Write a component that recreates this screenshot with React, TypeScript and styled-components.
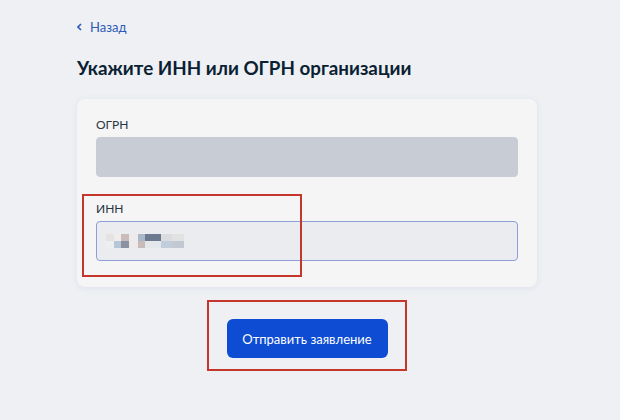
import React from 'react';
import styled, { createGlobalStyle } from 'styled-components';

const GlobalStyle = createGlobalStyle`
  html, body {
    margin: 0;
    padding: 0;
    background: #eef0f4;
  }
  body {
    font-family: Lato, "Noto Sans", "Liberation Sans", sans-serif;
    color: #0b1f33;
  }
`;

const Page = styled.div`
  position: relative;
  width: 620px;
  height: 420px;
  box-sizing: border-box;
  padding: 18px 0 0 77px;
  overflow: hidden;
`;

const BackLink = styled.a`
  display: flex;
  align-items: center;
  gap: 8px;
  height: 18px;
  font-size: 13px;
  color: #2e5bb8;
  text-decoration: none;
  cursor: pointer;
`;

const Title = styled.h1`
  margin: 19px 0 0 0;
  font-size: 18.8px;
  line-height: 26px;
  font-weight: 700;
  color: #0b1f33;
`;

const Card = styled.div`
  margin-top: 18px;
  width: 460px;
  box-sizing: border-box;
  padding: 19px 19px 26px 19px;
  background: #f5f5f6;
  border-radius: 8px;
  box-shadow: 0 1px 6px rgba(80, 100, 140, 0.1);
  display: flex;
  flex-direction: column;
  gap: 25px;
`;

const Field = styled.div`
  display: flex;
  flex-direction: column;
  gap: 5px;
`;

const Label = styled.label`
  font-size: 12px;
  line-height: 14px;
  color: #2a3541;
`;

const Input = styled.div<{ $disabled?: boolean }>`
  height: 40px;
  box-sizing: border-box;
  border-radius: 4px;
  background: ${p => (p.$disabled ? '#c8ccd4' : '#ebecef')};
  border: 1px solid ${p => (p.$disabled ? '#c8ccd4' : '#8d9ed8')};
  display: flex;
  align-items: center;
  padding-left: 9px;
`;

const Actions = styled.div`
  width: 460px;
  display: flex;
  justify-content: center;
  margin-top: 32px;
`;

const Button = styled.button`
  width: 161px;
  height: 39px;
  border: none;
  border-radius: 6px;
  background: #0d4cd3;
  color: #ffffff;
  font-family: Lato, "Noto Sans", "Liberation Sans", sans-serif;
  font-size: 13px;
  cursor: pointer;
`;

const Highlight = styled.div<{ $x: number; $y: number; $w: number; $h: number }>`
  position: absolute;
  left: ${p => p.$x}px;
  top: ${p => p.$y}px;
  width: ${p => p.$w}px;
  height: ${p => p.$h}px;
  box-sizing: border-box;
  border: 2px solid #c5372c;
  pointer-events: none;
`;

// pixelated (censored) value in the ИНН field
const blur: [number, number, number, string][] = [
  [0, 0, 8, '#e6e2e2'], [8, 0, 7, '#eeecec'], [15, 0, 8, '#cbbcbb'], [23, 0, 9, '#eceaea'],
  [32, 0, 7, '#a9b8c8'], [39, 0, 16, '#6c7a90'], [55, 0, 11, '#dcdbdd'], [66, 0, 12, '#e2e2e3'],
  [0, 7, 8, '#eceef0'], [8, 7, 7, '#b6c6d6'], [15, 7, 8, '#8a92a2'], [23, 7, 9, '#eceaea'],
  [32, 7, 7, '#c9bbbb'], [39, 7, 16, '#e4e7ec'], [55, 7, 11, '#c2cddb'], [66, 7, 12, '#c2c9d2'],
];

const Pixelated = () => (
  <svg width="78" height="14" viewBox="0 0 78 14">
    {blur.map(([x, y, w, c], i) => (
      <rect key={i} x={x} y={y} width={w} height={7} fill={c} />
    ))}
  </svg>
);

const App: React.FC = () => {
  return (
    <Page>
      <GlobalStyle />
      <BackLink>
        <svg width="5" height="8" viewBox="0 0 5 8">
          <path d="M4 1 L1 4 L4 7" fill="none" stroke="#2e5bb8" strokeWidth="1.6" />
        </svg>
        Назад
      </BackLink>
      <Title>Укажите ИНН или ОГРН организации</Title>
      <Card>
        <Field>
          <Label>ОГРН</Label>
          <Input $disabled />
        </Field>
        <Field>
          <Label>ИНН</Label>
          <Input>
            <Pixelated />
          </Input>
        </Field>
      </Card>
      <Actions>
        <Button>Отправить заявление</Button>
      </Actions>
      <Highlight $x={82} $y={194} $w={220} $h={83} />
      <Highlight $x={207} $y={300} $w={200} $h={71} />
    </Page>
  );
};

export default App;
